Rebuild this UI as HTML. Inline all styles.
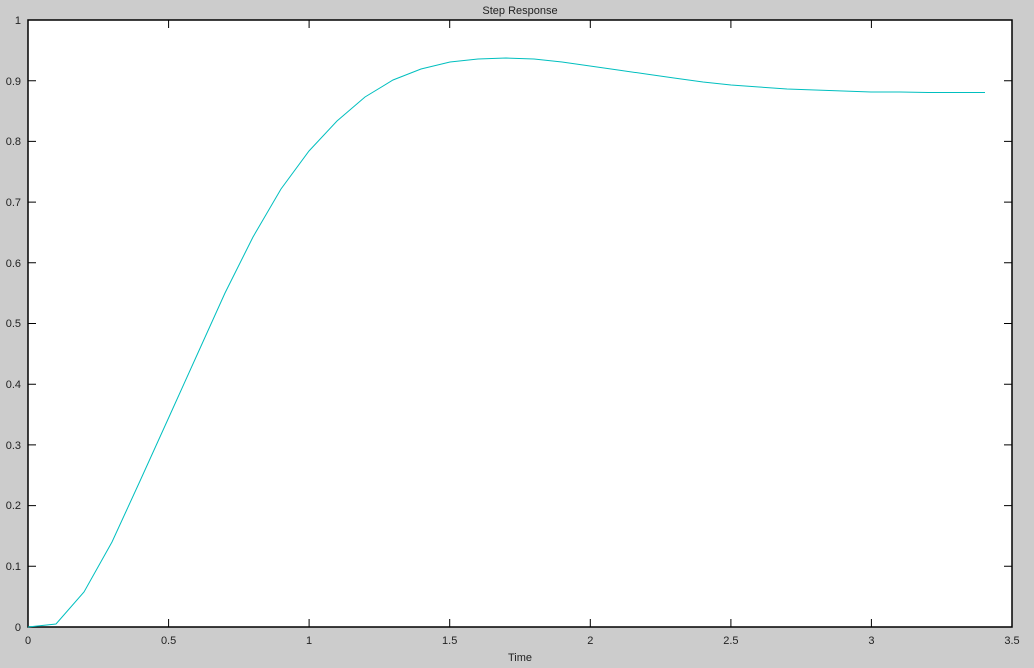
<!DOCTYPE html>
<html><head><style>body{margin:0;background:#ccc}svg{display:block}text{font-family:"Liberation Sans",sans-serif;font-size:11px;fill:#222}</style></head><body>
<svg width="1034" height="668" xmlns="http://www.w3.org/2000/svg">
<rect width="1034" height="668" fill="#cccccc"/>
<rect x="28" y="20" width="984" height="607" fill="#fff" stroke="#000" stroke-width="1.5"/>
<g stroke="#000" stroke-width="1">
<path d="M168.6,627v-8M309.1,627v-8M449.7,627v-8M590.3,627v-8M730.9,627v-8M871.4,627v-8M168.6,20v8M309.1,20v8M449.7,20v8M590.3,20v8M730.9,20v8M871.4,20v8"/>
<path d="M28,566.3h8M28,505.6h8M28,444.9h8M28,384.2h8M28,323.5h8M28,262.8h8M28,202.1h8M28,141.4h8M28,80.7h8M1012,566.3h-8M1012,505.6h-8M1012,444.9h-8M1012,384.2h-8M1012,323.5h-8M1012,262.8h-8M1012,202.1h-8M1012,141.4h-8M1012,80.7h-8"/>
</g>
<polyline fill="none" stroke="#00bfbf" stroke-width="1" points="28,627 56,624 84,592 112,542 140,481 169,417 197,355 225,293 253,237 281,189 309,151 337,121 365,97 393,80 421,69 450,62 478,59 506,58 534,59 562,62 590,66 618,70 646,74 674,78 703,82 731,85 759,87 787,89 815,90 843,91 871,92 900,92 928,92.5 956,92.5 985,92.5"/>
<text x="520" y="14" text-anchor="middle">Step Response</text>
<text x="520" y="661" text-anchor="middle">Time</text>
<g text-anchor="middle">
<text x="28" y="644">0</text><text x="168.6" y="644">0.5</text><text x="309.1" y="644">1</text><text x="449.7" y="644">1.5</text><text x="590.3" y="644">2</text><text x="730.9" y="644">2.5</text><text x="871.4" y="644">3</text><text x="1012" y="644">3.5</text>
</g>
<g text-anchor="end">
<text x="21" y="631">0</text><text x="21" y="570">0.1</text><text x="21" y="509">0.2</text><text x="21" y="449">0.3</text><text x="21" y="388">0.4</text><text x="21" y="327">0.5</text><text x="21" y="267">0.6</text><text x="21" y="206">0.7</text><text x="21" y="145">0.8</text><text x="21" y="85">0.9</text><text x="21" y="24">1</text>
</g>
</svg>
</body></html>
